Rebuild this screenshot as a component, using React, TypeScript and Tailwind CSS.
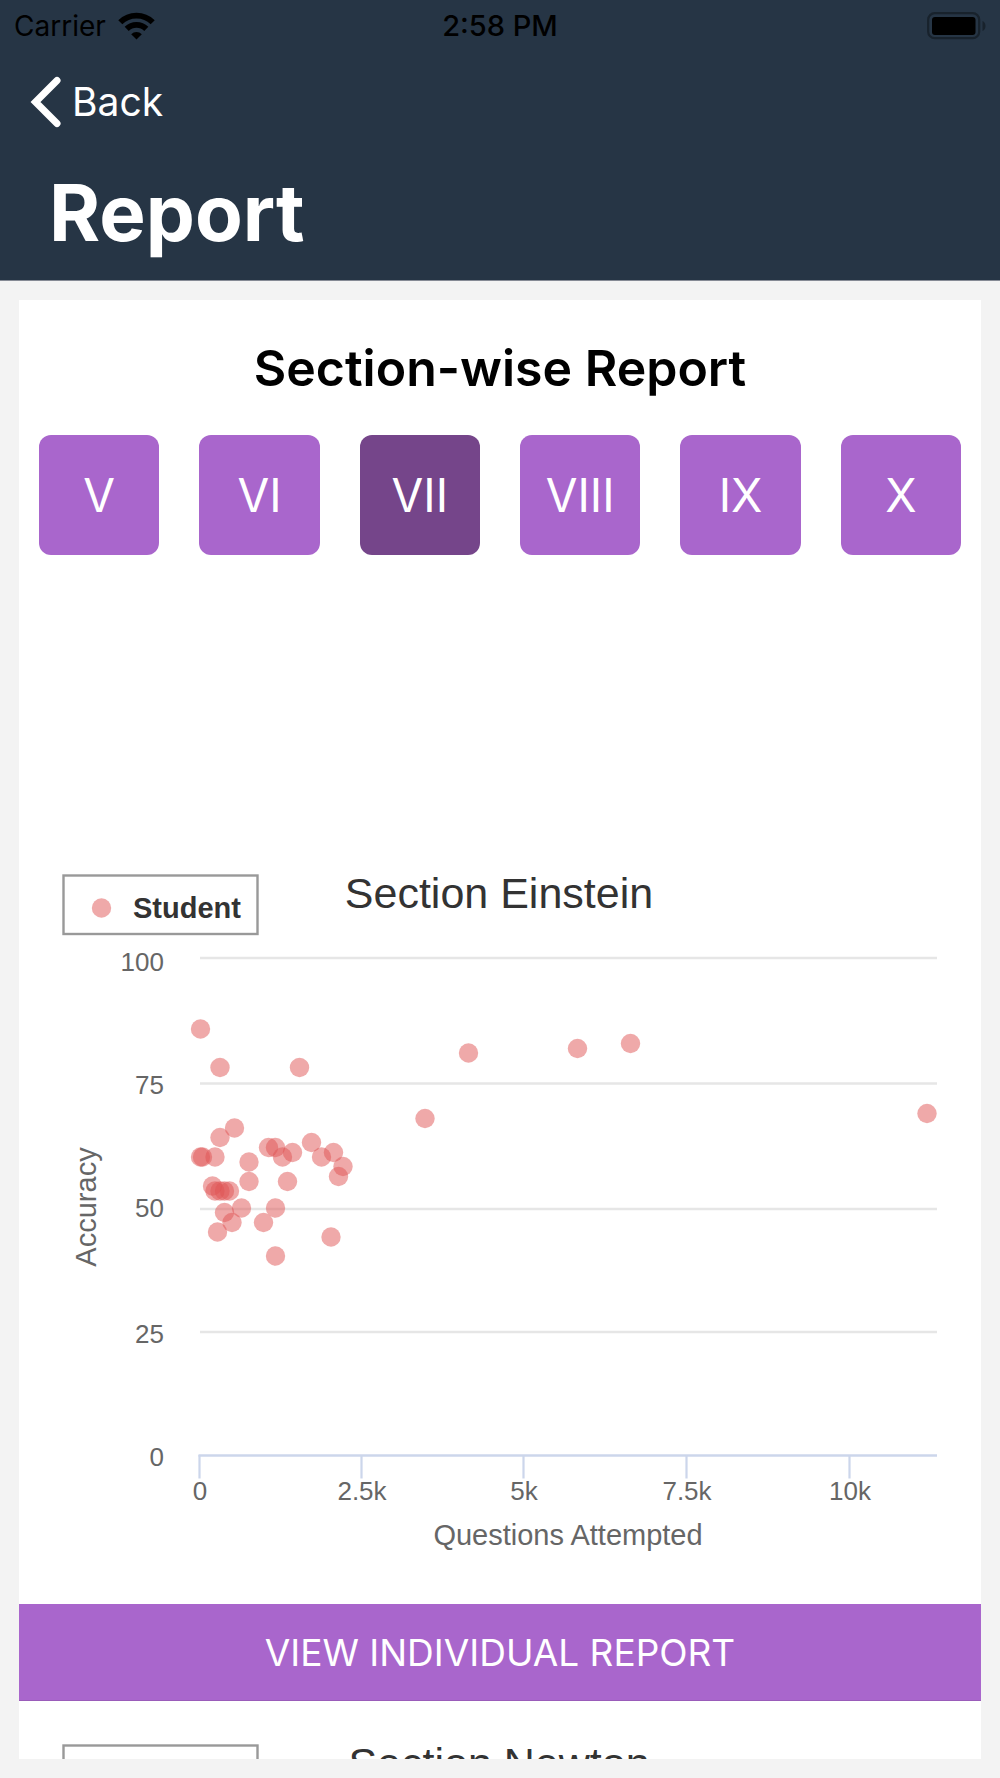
import { useState } from "react";

const classes = ["V", "VI", "VII", "VIII", "IX", "X"];

type Point = [number, number];

const einstein: Point[] = [
  [181.5, 198], [201, 236.5], [280.5, 236.5], [215.5, 297], [201, 306.5],
  [181.5, 326], [183.5, 326], [196, 326], [230, 331], [249.5, 316.5],
  [256.5, 316.5], [263.5, 326], [273.5, 321.5], [292.5, 311.5], [302.5, 326],
  [314.5, 321.5], [324, 335.5], [319.5, 345.5], [193.5, 355], [196, 360],
  [201, 360], [205.5, 360], [210.5, 360], [230, 350.5], [268.5, 350.5],
  [222.5, 377], [205.5, 381.5], [213, 391.5], [198.5, 401], [244.5, 391.5],
  [256.5, 377], [312, 406], [256.5, 425], [406, 287.5], [449.5, 222],
  [558.5, 217.5], [611.5, 212.5], [908, 282.5],
];

const yTicks = [
  { label: "100", line: 127, text: 140 },
  { label: "75", line: 252.5, text: 263 },
  { label: "50", line: 378, text: 386 },
  { label: "25", line: 501, text: 512 },
  { label: "0", line: 0, text: 635 },
];

const xTicks = [
  { label: "0", x: 181 },
  { label: "2.5k", x: 343 },
  { label: "5k", x: 505 },
  { label: "7.5k", x: 668 },
  { label: "10k", x: 831 },
];

function Axes() {
  return (
    <>
      {yTicks.map((t) => (
        <g key={t.label}>
          {t.line > 0 && <path d={`M181 ${t.line}H918`} stroke="#e6e6e6" strokeWidth="2.4" />}
          <text x="145" y={t.text} textAnchor="end" fill="#666666" className="text-[26px]">
            {t.label}
          </text>
        </g>
      ))}
      <path d="M179.500 624.500H918" stroke="#ccd6eb" strokeWidth="2.4" />
      {xTicks.map((t) => (
        <g key={t.label}>
          <path d={`M${t.x - 0.5} 624V647.500`} stroke="#ccd6eb" strokeWidth="2.2" />
          <text x={t.x} y="669" textAnchor="middle" fill="#666666" className="text-[26px]">
            {t.label}
          </text>
        </g>
      ))}
      <text x="549" y="714" textAnchor="middle" fill="#666666" className="text-[29px]">
        Questions Attempted
      </text>
      <text transform="translate(77 376) rotate(-90)" textAnchor="middle" fill="#666666" className="text-[29px]">
        Accuracy
      </text>
    </>
  );
}

function ScatterChart({ title, points }: { title: string; points: Point[] }) {
  return (
    <svg
      viewBox="0 0 962 773"
      role="img"
      aria-label={title}
      className="block w-full shrink-0 font-['Liberation_Sans',Arial,sans-serif]"
    >
      <text x="480" y="77" textAnchor="middle" fill="#333333" className="text-[43px]">
        {title}
      </text>
      <rect x="44.5" y="44.5" width="194" height="58.5" fill="#fff" stroke="#999999" strokeWidth="2.4" />
      {points.length > 0 && (
        <>
          <circle cx="82.5" cy="77" r="9.7" fill="#df5353" fillOpacity="0.5" />
          <text x="114" y="87" fill="#333333" className="text-[29px] font-bold">
            Student
          </text>
          <Axes />
        </>
      )}
      {points.map(([x, y], i) => (
        <circle key={i} cx={x} cy={y} r="9.7" fill="#df5353" fillOpacity="0.5" />
      ))}
    </svg>
  );
}

function WifiIcon() {
  return (
    <svg viewBox="0 0 37 28" className="h-7 w-[37px]" aria-hidden="true">
      <g fill="none" stroke="#000" strokeWidth="5.8">
        <path d="M2.300 10.300A23 23 0 0 1 34.700 10.300" />
        <path d="M8.700 16.900A13.900 13.900 0 0 1 28.300 16.900" />
      </g>
      <path d="M18.500 27.500l-5.300-5.300a7.500 7.500 0 0 1 10.600 0z" />
    </svg>
  );
}

function BatteryIcon() {
  return (
    <svg viewBox="0 0 59 28" className="h-7 w-[59px]" aria-hidden="true">
      <rect x="1.200" y="1.200" width="51" height="25" rx="6.500" fill="none" stroke="#18222c" strokeWidth="2.2" />
      <rect x="5" y="5" width="43.500" height="18" rx="3" />
      <path d="M55.500 9c4 1.800 4 8.200 0 10z" fill="#18222c" />
    </svg>
  );
}

export default function App() {
  const [active, setActive] = useState("VII");
  return (
    <div className="flex h-screen flex-col bg-[#f3f3f3] font-['Inter',sans-serif]">
      <header className="shrink-0 border-b border-[#858a94] bg-[#263545]">
        <div className="grid h-[50px] grid-cols-[1fr_auto_1fr] items-center px-[14px] pt-px text-[28px] text-black">
          <div className="flex items-center gap-3">
            <span>Carrier</span>
            <WifiIcon />
          </div>
          <span className="text-center text-[29px] font-medium">2:58 PM</span>
          <div className="flex justify-end">
            <BatteryIcon />
          </div>
        </div>
        <button type="button" className="flex h-[104px] items-center gap-[10px] pl-[30px] text-[39px] text-white">
          <svg viewBox="0 0 32 52" className="h-[52px] w-8" aria-hidden="true">
            <path
              d="M27 4.500L5.500 26L27 47.500"
              fill="none"
              stroke="#fff"
              strokeWidth="7"
              strokeLinecap="round"
              strokeLinejoin="miter"
            />
          </svg>
          Back
        </button>
        <h1 className="h-[126px] pl-[49px] text-[78px] leading-[118px] font-bold text-white">Report</h1>
      </header>

      <main className="m-[19px] flex min-h-0 flex-1 flex-col overflow-y-auto bg-white [scrollbar-width:none]">
        <h2 className="shrink-0 pt-9 text-center text-[50px] leading-[64px] font-semibold text-black">
          Section-wise Report
        </h2>
        <div className="mt-[35px] grid shrink-0 grid-cols-6 gap-10 px-5">
          {classes.map((c) => (
            <button
              key={c}
              type="button"
              aria-pressed={c === active}
              onClick={() => setActive(c)}
              className={
                c === active
                  ? "aspect-square rounded-xl bg-[#75458a] text-[46px] text-white"
                  : "aspect-square rounded-xl bg-[#a966cc] text-[46px] text-white"
              }
            >
              {c}
            </button>
          ))}
        </div>
        <div className="mt-[276px] flex shrink-0 flex-col">
          <ScatterChart title="Section Einstein" points={einstein} />
          <button
            type="button"
            className="h-[97px] border-b border-[#9a5cba] bg-[#a966cc] text-[37px] text-white"
          >
            VIEW INDIVIDUAL REPORT
          </button>
          <ScatterChart title="Section Newton" points={[]} />
        </div>
      </main>
    </div>
  );
}
